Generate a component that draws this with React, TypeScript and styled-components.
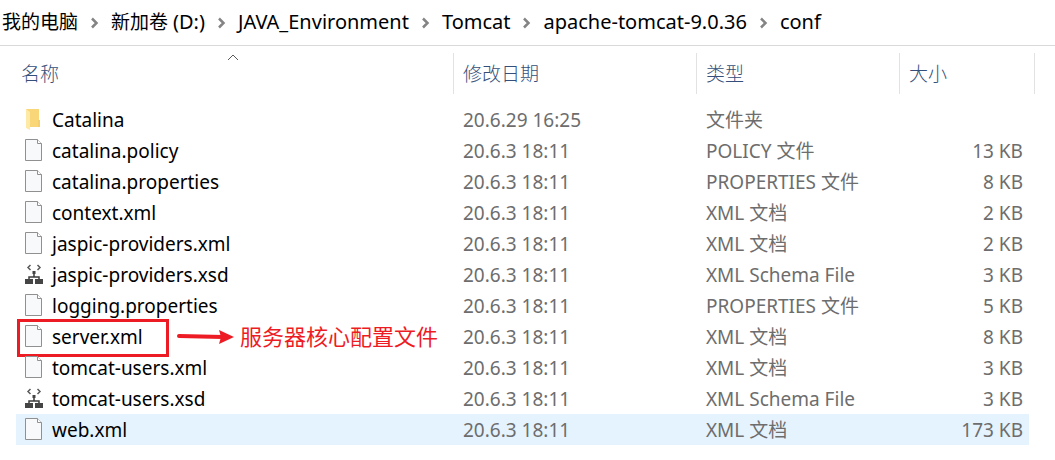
import React from 'react';
import styled, { createGlobalStyle } from 'styled-components';

const GlobalStyle = createGlobalStyle`
  *, *::before, *::after { box-sizing: border-box; }
  body {
    margin: 0;
    background: #fff;
    color: #000;
    font-family: "Noto Sans", "Noto Sans CJK SC", sans-serif;
    font-size: 19px;
    line-height: 31px;
  }
`;

const Breadcrumb = styled.nav`
  height: 46px;
  padding-left: 2px;
  border-bottom: 1px solid #d9d9d9;
`;

const Crumbs = styled.ol`
  display: flex;
  align-items: center;
  height: 44px;
  margin: 0;
  padding: 0;
  list-style: none;
  white-space: nowrap;
`;

const Crumb = styled.li`
  display: flex;
  align-items: center;
`;

const CrumbLink = styled.a`
  color: inherit;
  text-decoration: none;
`;

const Latin = styled.span`
  font-size: 20px;
`;

const Separator = styled.svg`
  width: 9px;
  height: 12px;
  margin: 2px 12px 0;
`;

const FileTable = styled.table`
  width: calc(100% - 36px);
  margin-left: 16px;
  table-layout: fixed;
  border-collapse: separate;
  border-spacing: 0;
  white-space: nowrap;
`;

const Col = styled.col<{ $width?: number }>`
  width: ${({ $width }) => ($width ? `${$width}px` : 'auto')};
`;

const HeadCell = styled.th<{ $first?: boolean }>`
  position: relative;
  height: 58px;
  padding: ${({ $first }) => ($first ? '7px 9px 9px 5px' : '7px 9px 9px 9px')};
  font-weight: 300;
  text-align: left;
  vertical-align: top;
  color: #34507a;

  &::after {
    content: '';
    position: absolute;
    top: 7px;
    right: 0;
    width: 1px;
    height: 41px;
    background: #e2e2e2;
  }
`;

const SortButton = styled.button`
  display: block;
  height: 42px;
  padding: 0;
  border: 0;
  background: none;
  color: inherit;
  font: inherit;
`;

const SortMark = styled.svg`
  position: absolute;
  top: 8px;
  left: 50%;
  width: 12px;
  height: 7px;
  margin-left: -8px;
`;

const Row = styled.tr<{ $active?: boolean }>`
  height: 31px;
  line-height: 29px;
  td:not(:last-child) {
    background: ${({ $active }) => ($active ? '#e5f3ff' : 'transparent')};
  }
`;

const Cell = styled.td<{ $align?: 'right' }>`
  height: 31px;
  padding: 2px 6px 0 9px;
  color: #6d6d6d;
  text-align: ${({ $align }) => $align ?? 'left'};
`;

const NameCell = styled.td`
  position: relative;
  height: 31px;
  padding: 2px 0 0 8px;
`;

const FileName = styled.div`
  display: flex;
  align-items: flex-start;
  gap: 8px;
  height: 29px;
`;

const Icon = styled.svg`
  flex: none;
  width: 20px;
  height: 24px;
  margin-top: 1px;
`;

const Highlight = styled.div`
  position: absolute;
  top: -2px;
  left: 1px;
  width: 152px;
  height: 38px;
  border: 3px solid #ed1c24;
  pointer-events: none;
`;

const Note = styled.div`
  position: absolute;
  top: 0;
  left: 161px;
  display: flex;
  align-items: center;
  gap: 6px;
  height: 31px;
  color: #ed1c24;
  font-size: 22px;
`;

const Arrow = styled.svg`
  flex: none;
  width: 57px;
  height: 15px;
`;

type Kind = 'folder' | 'file' | 'schema';

function FileIcon({ kind }: { kind: Kind }) {
  if (kind === 'folder') {
    return (
      <Icon viewBox="0 0 20 24" aria-hidden="true">
        <path d="M2 2h13v11h1v7H6z" fill="#f9d778" />
        <path d="M14 13h2v7h-2z" fill="#f4cf6c" />
        <path d="M2 2l4 3v18l-4-2z" fill="#ffe9a6" />
      </Icon>
    );
  }
  if (kind === 'schema') {
    return (
      <Icon viewBox="0 0 20 24" aria-hidden="true">
        <path d="M6.500 3L4 5.500 6.500 8M13.500 3L16 5.500 13.500 8" fill="none" stroke="#5a5a5a" strokeWidth="1.500" />
        <path d="M10 10v5M5 18v-3h10v3" fill="none" stroke="#3d3d3d" strokeWidth="1.500" />
        <path d="M8.500 9h3v3h-3zM1 17h8v5H1zM11 17h8v5h-8z" fill="#454545" />
      </Icon>
    );
  }
  return (
    <Icon viewBox="0 0 20 24" aria-hidden="true">
      <path d="M1.500 1.500h12l4 4v17h-16z" fill="#f7f9fa" stroke="#909090" />
      <path d="M13.500 1.500v4h4" fill="#fff" stroke="#909090" />
    </Icon>
  );
}

interface Entry {
  name: string;
  kind: Kind;
  date: string;
  type: string;
  size: string;
  note?: string;
  active?: boolean;
}

const path: { local?: string; latin?: string }[] = [
  { local: '我的电脑' },
  { local: '新加卷 ', latin: '(D:)' },
  { latin: 'JAVA_Environment' },
  { latin: 'Tomcat' },
  { latin: 'apache-tomcat-9.0.36' },
  { latin: 'conf' },
];

const entries: Entry[] = [
  { name: 'Catalina', kind: 'folder', date: '20.6.29 16:25', type: '文件夹', size: '' },
  { name: 'catalina.policy', kind: 'file', date: '20.6.3 18:11', type: 'POLICY 文件', size: '13 KB' },
  { name: 'catalina.properties', kind: 'file', date: '20.6.3 18:11', type: 'PROPERTIES 文件', size: '8 KB' },
  { name: 'context.xml', kind: 'file', date: '20.6.3 18:11', type: 'XML 文档', size: '2 KB' },
  { name: 'jaspic-providers.xml', kind: 'file', date: '20.6.3 18:11', type: 'XML 文档', size: '2 KB' },
  { name: 'jaspic-providers.xsd', kind: 'schema', date: '20.6.3 18:11', type: 'XML Schema File', size: '3 KB' },
  { name: 'logging.properties', kind: 'file', date: '20.6.3 18:11', type: 'PROPERTIES 文件', size: '5 KB' },
  { name: 'server.xml', kind: 'file', date: '20.6.3 18:11', type: 'XML 文档', size: '8 KB', note: '服务器核心配置文件' },
  { name: 'tomcat-users.xml', kind: 'file', date: '20.6.3 18:11', type: 'XML 文档', size: '3 KB' },
  { name: 'tomcat-users.xsd', kind: 'schema', date: '20.6.3 18:11', type: 'XML Schema File', size: '3 KB' },
  { name: 'web.xml', kind: 'file', date: '20.6.3 18:11', type: 'XML 文档', size: '173 KB', active: true },
];

export default function App() {
  return (
    <>
      <GlobalStyle />
      <Breadcrumb>
        <Crumbs>
          {path.map(({ local, latin }, i) => (
            <Crumb key={i}>
              {i > 0 && (
                <Separator viewBox="0 0 9 12" aria-hidden="true">
                  <path d="M2 1.500L6.500 6l-4.500 4.500" fill="none" stroke="#848484" strokeWidth="2.500" />
                </Separator>
              )}
              <CrumbLink href="#">
                {local}
                {latin && <Latin>{latin}</Latin>}
              </CrumbLink>
            </Crumb>
          ))}
        </Crumbs>
      </Breadcrumb>
      <main>
        <FileTable>
          <colgroup>
            <Col />
            <Col $width={243} />
            <Col $width={203} />
            <Col $width={129} />
            <Col $width={6} />
          </colgroup>
          <thead>
            <tr>
              <HeadCell $first aria-sort="ascending">
                <SortMark viewBox="0 0 12 7" aria-hidden="true">
                  <path d="M1 6l5-5 5 5" fill="none" stroke="#5a5a5a" />
                </SortMark>
                <SortButton>名称</SortButton>
              </HeadCell>
              <HeadCell><SortButton>修改日期</SortButton></HeadCell>
              <HeadCell><SortButton>类型</SortButton></HeadCell>
              <HeadCell colSpan={2}><SortButton>大小</SortButton></HeadCell>
            </tr>
          </thead>
          <tbody>
            {entries.map((entry) => (
              <Row key={entry.name} $active={entry.active}>
                <NameCell>
                  <FileName>
                    <FileIcon kind={entry.kind} />
                    {entry.name}
                  </FileName>
                  {entry.note && (
                    <>
                      <Highlight />
                      <Note>
                        <Arrow viewBox="0 0 57 15" aria-hidden="true">
                          <path d="M2 7l44 1" stroke="#ed1c24" strokeWidth="4" strokeLinecap="round" />
                          <path d="M42 1l15 7-15 7 2-7z" fill="#ed1c24" />
                        </Arrow>
                        {entry.note}
                      </Note>
                    </>
                  )}
                </NameCell>
                <Cell>{entry.date}</Cell>
                <Cell>{entry.type}</Cell>
                <Cell $align="right">{entry.size}</Cell>
                <td />
              </Row>
            ))}
          </tbody>
        </FileTable>
      </main>
    </>
  );
}
